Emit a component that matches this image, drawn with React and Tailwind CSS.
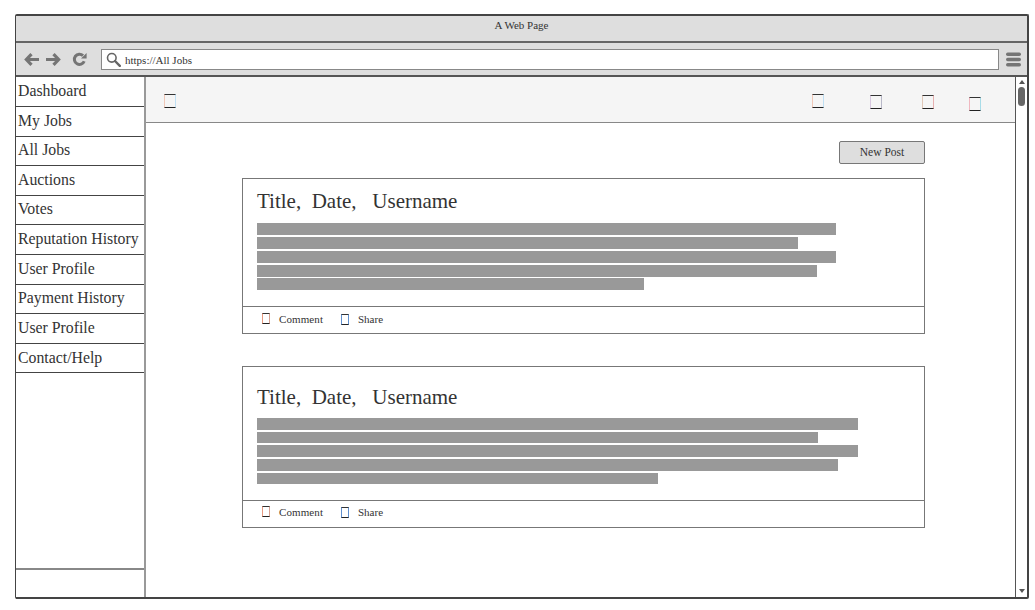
import React from "react";

const nav = [
  { label: "Dashboard", h: 30, lh: 28 },
  { label: "My Jobs", h: 30, lh: 28 },
  { label: "All Jobs", h: 29, lh: 26 },
  { label: "Auctions", h: 30, lh: 28 },
  { label: "Votes", h: 29, lh: 26 },
  { label: "Reputation History", h: 30, lh: 28 },
  { label: "User Profile", h: 30, lh: 28 },
  { label: "Payment History", h: 29, lh: 26 },
  { label: "User Profile", h: 30, lh: 28 },
  { label: "Contact/Help", h: 29, lh: 28 },
];

function Tofu({ className = "", tint = "border-l-[#f0c8b8] border-r-[#c0e0f4]" }) {
  return <span className={"block shrink-0 border border-t-[#333] border-b-[#222] " + tint + " " + className} />;
}

function Bars({ widths, heights, gap }) {
  return (
    <div className="flex flex-col">
      {widths.map((w, i) => (
        <div key={i} className="bg-[#999999]" style={{ width: w, height: heights[i], marginBottom: i < widths.length - 1 ? gap[i] : 0 }} />
      ))}
    </div>
  );
}

function Card({ height, className, titleTop, barsTop, footerH, widths, heights, gap, shift }) {
  return (
    <div className={"ml-[96px] w-[683px] flex flex-col border border-[#777] " + className} style={{ height }}>
      <div className="flex-1 pl-[14px]" style={{ paddingTop: titleTop }}>
        <div className="text-[21px] leading-[24px] whitespace-pre text-[#333]">{"Title,  Date,   Username"}</div>
        <div style={{ marginTop: barsTop }}>
          <Bars widths={widths} heights={heights} gap={gap} />
        </div>
      </div>
      <div className="flex items-center border-t border-[#777] pl-[19px] text-[11px] text-[#333]" style={{ height: footerH, paddingBottom: shift }}>
        <Tofu className="w-[8px] h-[11px] -mt-[2px]" tint="border-l-[#e89a80] border-r-[#d8a090]" />
        <span className="ml-[9px] w-[45px] whitespace-nowrap tracking-[0.1px]">Comment</span>
        <Tofu className="w-[8px] h-[11px] ml-[17px]" tint="border-l-[#6090d0] border-r-[#6090d0]" />
        <span className="ml-[9px] whitespace-nowrap">Share</span>
      </div>
    </div>
  );
}

export default function App() {
  return (
    <div className="w-[1035px] h-[610px] bg-white pt-[14px] pl-[15px] font-['Liberation_Serif',serif] text-[#333] overflow-hidden">
      <div className="w-[1014px] h-[585px] flex flex-col border-t-2 border-r-2 border-l border-[#444] rounded-[2px]">
        <div className="h-[27px] shrink-0 bg-[#dedede] border-b-2 border-[#666] flex items-center justify-center text-[11px] pb-[6px]">
          A Web Page
        </div>
        <div className="h-[34px] shrink-0 bg-[#dedede] border-b-2 border-[#555] flex items-center">
          <svg className="ml-[8px] shrink-0" width="15" height="15" viewBox="0 0 15 15" fill="none" stroke="#757575" strokeWidth="3.2" strokeLinejoin="miter">
            <path d="M7.5 2.2 2.4 7.5l5.1 5.3M3 7.5h12" />
          </svg>
          <svg className="ml-[7px] shrink-0" width="15" height="15" viewBox="0 0 15 15" fill="none" stroke="#757575" strokeWidth="3.2" strokeLinejoin="miter">
            <path d="M7.5 2.2 12.6 7.5l-5.1 5.3M12 7.5H0" />
          </svg>
          <svg className="ml-[11px] shrink-0" width="15" height="15" viewBox="0 0 15 15" fill="none" stroke="#757575" strokeWidth="3">
            <path d="M12.2 9.2A5.1 5.1 0 1 1 11 3.6" />
            <path d="M9 6.6h5.6V1z" fill="#757575" stroke="none" />
          </svg>
          <div className="ml-[14px] w-[898px] h-[21px] bg-white border border-[#888] flex items-center">
            <svg className="ml-[4px] w-[15px] h-[15px] shrink-0" viewBox="0 0 15 15" fill="none" stroke="#666">
              <circle cx="5.8" cy="5.8" r="4.3" strokeWidth="1.6" />
              <path d="M9 9l4.8 4.8" strokeWidth="2.4" strokeLinecap="round" />
            </svg>
            <span className="ml-[4px] pt-[2px] text-[11px] text-[#333]">https://All Jobs</span>
          </div>
          <svg className="ml-[7px] shrink-0" width="15" height="15" viewBox="0 0 15 15" fill="#757575">
            <rect x="0" y="0.5" width="15" height="3.4" rx="1.7" />
            <rect x="0" y="5.8" width="15" height="3.4" rx="1.7" />
            <rect x="0" y="11.1" width="15" height="3.4" rx="1.7" />
          </svg>
        </div>
        <div className="flex-1 flex min-h-0">
          <aside className="w-[130px] shrink-0 flex flex-col border-r-2 border-[#999]">
            {nav.map((n, i) => (
              <div key={i} className="pl-[2px] text-[15.8px] border-b border-[#444] whitespace-nowrap" style={{ height: n.h, lineHeight: n.lh + "px" }}>{n.label}</div>
            ))}
            <div className="flex-1" />
            <div className="h-[29px] border-t-2 border-[#888]" />
          </aside>
          <main className="flex-1 flex flex-col min-w-0">
            <div className="h-[46px] shrink-0 bg-[#f5f5f5] border-b border-[#888] flex relative">
              <Tofu className="absolute left-[18px] top-[17px] w-[12px] h-[14px]" />
              <Tofu className="absolute left-[666px] top-[17px] w-[12px] h-[14px]" />
              <Tofu className="absolute left-[724px] top-[18px] w-[12px] h-[14px]" tint="border-l-[#d8c8e0] border-r-[#b8b8c8]" />
              <Tofu className="absolute left-[776px] top-[18px] w-[12px] h-[14px]" tint="border-l-[#e0c8b8] border-r-[#e8b0b0]" />
              <Tofu className="absolute left-[823px] top-[20px] w-[12px] h-[14px]" tint="border-l-[#f0b8c0] border-r-[#a8dce8]" />
            </div>
            <div className="flex justify-end mt-[18px] pr-[90px]">
              <div className="w-[86px] h-[23px] bg-[#dedede] border border-[#777] rounded-[2px] flex items-center justify-center text-[11.5px] text-[#333]">New Post</div>
            </div>
            <Card height={156} className="mt-[14px]" titleTop={10} barsTop={10} footerH={27} shift={1}
              widths={[579,541,579,560,387]} heights={[12,12,12,12,12]} gap={[2,2,2,1,0]} />
            <Card height={162} className="mt-[32px]" titleTop={18} barsTop={9} footerH={27} shift={3}
              widths={[601,561,601,581,401]} heights={[12,11,12,12,11]} gap={[2,2,2,2,0]} />
          </main>
          <div className="w-[12px] shrink-0 border-l border-[#555] flex flex-col items-center">
            <span className="mt-[3px] w-0 h-0 border-x-[3.5px] border-x-transparent border-b-[4px] border-b-[#555]" />
            <span className="mt-[3px] w-[7px] h-[19px] rounded-full bg-[#666]" />
            <span className="mt-auto mb-[4px] w-0 h-0 border-x-[3.5px] border-x-transparent border-t-[4px] border-t-[#555]" />
          </div>
        </div>
        <div className="h-[2px] shrink-0 bg-[#444]" />
      </div>
    </div>
  );
}
